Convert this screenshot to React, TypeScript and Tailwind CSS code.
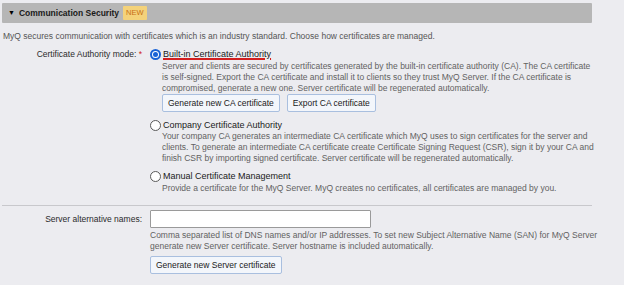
import React from 'react';

function Radio({ checked }: { checked?: boolean }) {
  return checked ? (
    <span className="w-[11px] h-[11px] rounded-full border-[2px] border-[#1a63d6] bg-white flex items-center justify-center shrink-0">
      <span className="w-[5px] h-[5px] rounded-full bg-[#1a63d6]" />
    </span>
  ) : (
    <span className="w-[11px] h-[11px] rounded-full border border-[#5a5a5a] bg-white shrink-0" />
  );
}

function Btn({ children }: { children: React.ReactNode }) {
  return (
    <button className="h-[18px] px-[5px] border border-[#a9bfdf] bg-[#f3f6fb] rounded-[2px] text-[#1a1a1a] text-[8.5px] leading-none whitespace-nowrap">
      {children}
    </button>
  );
}

function Lines({ lines }: { lines: string[] }) {
  return (
    <div className="text-[#626262] leading-[11px]">
      {lines.map((l) => (
        <div key={l} className="whitespace-nowrap">
          {l}
        </div>
      ))}
    </div>
  );
}

export default function App() {
  return (
    <div className="w-[624px] h-[285px] overflow-hidden bg-[#ececf0] text-[8.5px] text-[#2a2a2a] font-['Segoe_UI','Liberation_Sans',sans-serif]">
      <div className="pt-[3px] pl-[2px]">
        <div className="w-[590px] h-[20px] bg-[#b6b6b6] rounded-[1px] flex items-center pl-[6px] gap-[4px]">
          <span className="text-[7px] text-black">▼</span>
          <span className="font-bold text-[8.5px] text-[#1a1a1a]">Communication Security</span>
          <span className="px-[3px] h-[14px] flex items-center bg-[#f4d27a] text-[#c86f14] text-[7.5px] rounded-[1px]">
            NEW
          </span>
        </div>
      </div>

      <p className="pl-[3px] mt-[8px] text-[#555] leading-[11px] whitespace-nowrap">
        MyQ secures communication with certificates which is an industry standard. Choose how certificates are managed.
      </p>

      <div className="grid grid-cols-[142px_1fr] gap-x-[8px] mt-[6px]">
        <div className="text-right leading-[13px] whitespace-nowrap">
          Certificate Authority mode: <span className="text-[#d02020]">*</span>
        </div>
        <div className="flex flex-col">
          <label className="flex items-center gap-[2px] h-[13px]">
            <Radio checked />
            <span className="text-[#1a1a1a] text-[9px] leading-[13px] underline decoration-[#d21f1f] decoration-2 underline-offset-[1px]">
              Built-in Certificate Authority
            </span>
          </label>
          <div className="pl-[12px]">
            <Lines
              lines={[
                'Server and clients are secured by certificates generated by the built-in certificate authority (CA). The CA certificate',
                'is self-signed. Export the CA certificate and install it to clients so they trust MyQ Server. If the CA certificate is',
                'compromised, generate a new one. Server certificate will be regenerated automatically.',
              ]}
            />
            <div className="flex gap-[7px]">
              <Btn>Generate new CA certificate</Btn>
              <Btn>Export CA certificate</Btn>
            </div>
          </div>

          <label className="flex items-center gap-[2px] h-[13px] mt-[7px]">
            <Radio />
            <span className="text-[#1a1a1a] text-[9px]">Company Certificate Authority</span>
          </label>
          <div className="pl-[12px] -mt-[1px]">
            <Lines
              lines={[
                'Your company CA generates an intermediate CA certificate which MyQ uses to sign certificates for the server and',
                'clients. To generate an intermediate CA certificate create Certificate Signing Request (CSR), sign it by your CA and',
                'finish CSR by importing signed certificate. Server certificate will be regenerated automatically.',
              ]}
            />
          </div>

          <label className="flex items-center gap-[2px] h-[13px] mt-[6px]">
            <Radio />
            <span className="text-[#1a1a1a] text-[9px]">Manual Certificate Management</span>
          </label>
          <div className="pl-[12px]">
            <Lines lines={['Provide a certificate for the MyQ Server. MyQ creates no certificates, all certificates are managed by you.']} />
          </div>
        </div>
      </div>

      <div className="ml-[2px] w-[590px] border-t border-[#c8c8cc] mt-[11px]" />

      <div className="grid grid-cols-[142px_1fr] gap-x-[8px] mt-[4px]">
        <div className="text-right leading-[18px] whitespace-nowrap">Server alternative names:</div>
        <div className="flex flex-col">
          <input className="w-[221px] h-[18px] bg-white border border-[#9a9a9a] rounded-[1px] outline-none" />
          <div className="mt-[2px]">
            <Lines
              lines={[
                'Comma separated list of DNS names and/or IP addresses. To set new Subject Alternative Name (SAN) for MyQ Server',
                'generate new Server certificate. Server hostname is included automatically.',
              ]}
            />
          </div>
          <div className="mt-[4px]">
            <Btn>Generate new Server certificate</Btn>
          </div>
        </div>
      </div>
    </div>
  );
}
